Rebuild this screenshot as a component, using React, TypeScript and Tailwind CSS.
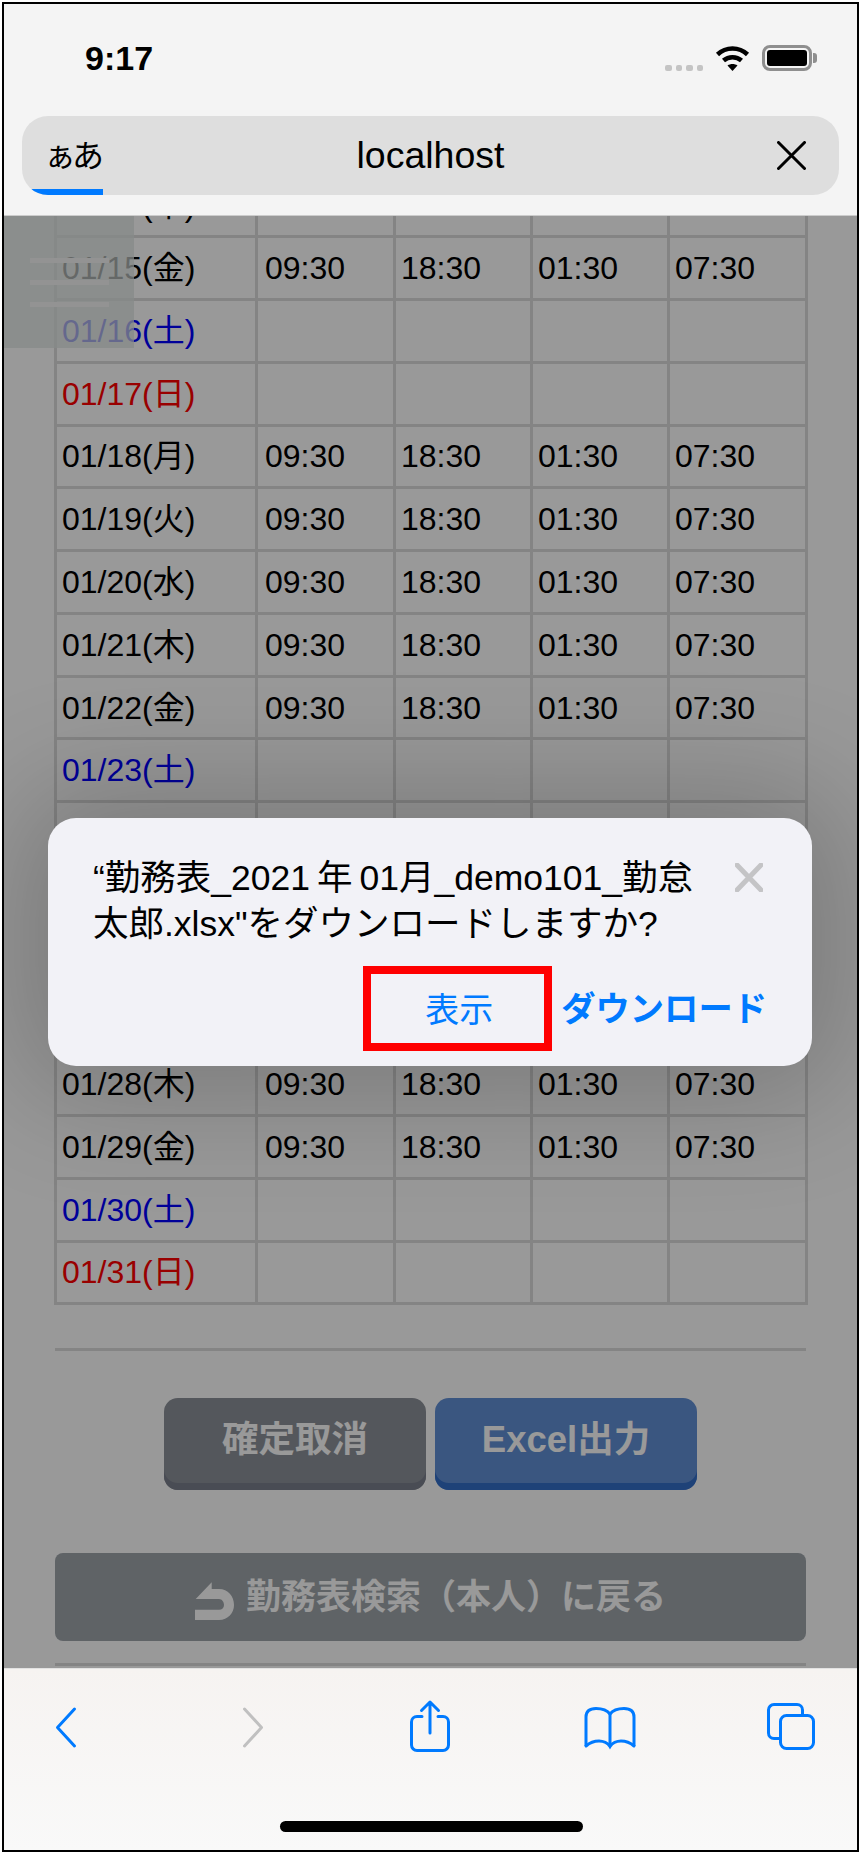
const FONT = "font-['Liberation_Sans','Noto_Sans_CJK_JP',sans-serif]";

const days = [
  ["01/14(木)", "work"],
  ["01/15(金)", "work"],
  ["01/16(土)", "sat"],
  ["01/17(日)", "sun"],
  ["01/18(月)", "work"],
  ["01/19(火)", "work"],
  ["01/20(水)", "work"],
  ["01/21(木)", "work"],
  ["01/22(金)", "work"],
  ["01/23(土)", "sat"],
  ["01/24(日)", "sun"],
  ["01/25(月)", "work"],
  ["01/26(火)", "work"],
  ["01/27(水)", "work"],
  ["01/28(木)", "work"],
  ["01/29(金)", "work"],
  ["01/30(土)", "sat"],
  ["01/31(日)", "sun"],
];

const times = ["09:30", "18:30", "01:30", "07:30"];

function StatusBar() {
  return (
    <div className="flex justify-between pl-[81px] pr-[40px] pt-[40px] h-[112px]">
      <div className="text-[34px] leading-[28px] font-bold text-black">9:17</div>
      <div className="flex items-end h-[27px]">
        <div className="flex gap-[4px] mr-[12px]">
          {[0, 1, 2, 3].map((i) => (
            <div key={i} className="w-[6.5px] h-[6.5px] rounded-[2px] bg-[#c4c4c4]" />
          ))}
        </div>
        <svg width="35" height="26" viewBox="0 0 35 26" className="mr-[12px]">
          <path d="M2.5 9.5C11 1.5 24 1.5 32.5 9.5" fill="none" stroke="#000" strokeWidth="4.5" />
          <path d="M8.5 15.5C13.5 11 21.5 11 26.5 15.5" fill="none" stroke="#000" strokeWidth="4.5" />
          <path d="M12.5 20.5C15.5 18.5 19.5 18.5 22.5 20.5L17.5 26Z" fill="#000" />
        </svg>
        <div className="flex items-center">
          <div className="w-[50px] h-[26px] border-[3px] border-[#8e8e8e] rounded-[8px] p-[2px]">
            <div className="w-full h-full bg-black rounded-[3px]" />
          </div>
          <div className="w-[4px] h-[10px] ml-[1px] bg-[#8e8e8e] rounded-r-[3px]" />
        </div>
      </div>
    </div>
  );
}

function UrlBar() {
  return (
    <div className="relative mx-[18px] h-[79px] rounded-[26px] bg-[#dedede] overflow-hidden grid grid-cols-[1fr_auto_1fr] items-center pl-[22px] pr-[33px]">
      <div className="text-[32px] leading-none tracking-[-4px] text-black">ぁあ</div>
      <div className="ml-[11px] text-[37.5px] leading-none text-black">localhost</div>
      <svg width="29" height="29" viewBox="0 0 29 29" className="justify-self-end">
        <path d="M1.5 1.5L27.5 27.5M27.5 1.5L1.5 27.5" stroke="#000" strokeWidth="3" strokeLinecap="round" />
      </svg>
      <div className="absolute left-0 bottom-0 w-[81px] h-[6px] bg-[#007aff]" />
    </div>
  );
}

function AttendanceTable() {
  return (
    <table className="ml-[50px] mt-[-43.5px] w-[751px] table-fixed border-collapse text-[32px] text-black">
      <colgroup>
        <col className="w-[201px]" />
        <col className="w-[138px]" />
        <col className="w-[137px]" />
        <col className="w-[137px]" />
        <col className="w-[138px]" />
      </colgroup>
      <tbody>
        {days.map(([label, kind]) => (
          <tr key={label} className="h-[62.77px]">
            <td
              className={
                "border-[3px] border-[#dcdcdc] px-[5px] py-0 leading-none whitespace-nowrap " +
                (kind === "sat" ? "text-[#0000ff]" : kind === "sun" ? "text-[#ff0000]" : "")
              }
            >
              {label}
            </td>
            {times.map((t, i) => (
              <td key={t} className={"border-[3px] border-[#dcdcdc] py-0 leading-none " + (i === 0 ? "px-[7px]" : "px-[5px]")}>
                {kind === "work" ? t : ""}
              </td>
            ))}
          </tr>
        ))}
      </tbody>
    </table>
  );
}

function ActionButton({ label, top, bottom }: { label: string; top: string; bottom: string }) {
  return (
    <button className={"relative w-[262px] h-[92px] rounded-[14px] pb-[7px] text-[36.5px] font-bold text-white " + top + " " + bottom}>
      {label}
    </button>
  );
}

function PageBelow() {
  return (
    <>
      <div className="ml-[51px] w-[751px] mt-[43px] h-[3px] bg-[#dcdcdc]" />
      <div className="flex justify-center gap-[9px] mt-[47px]">
        <ActionButton label="確定取消" top="bg-[#8c9199]" bottom="shadow-[inset_0_-7px_0_#7b7f8c]" />
        <ActionButton label="Excel出力" top="bg-[#628fd5]" bottom="shadow-[inset_0_-7px_0_#336ec9]" />
      </div>
      <div className="ml-[51px] w-[751px] mt-[63px] h-[88px] rounded-[8px] bg-[#9ea5ab] flex items-center justify-center gap-[11px] text-white text-[35px] font-bold">
        <svg width="40" height="38" viewBox="0 0 40 38" className="mt-[8px]">
          <path d="M16.7 .3L.7 17H24C27 17 29 20 29 23C29 26 27 27.7 24 27.7H0V38H24C33 38 39 31 39 23C39 14 33 7 24 7H16.7Z" fill="#fff" />
        </svg>
        <span>勤務表検索（本人）に戻る</span>
      </div>
      <div className="ml-[51px] w-[751px] mt-[22px] h-[3px] bg-[#dcdcdc]" />
    </>
  );
}

function MenuTab() {
  return (
    <div className="absolute left-0 top-0 w-[130px] h-[132px] bg-[#878b89]/75 pl-[26px] pt-[42px] flex flex-col gap-[17px]">
      {[0, 1, 2].map((i) => (
        <div key={i} className="w-[79px] h-[5px] bg-[#939393]" />
      ))}
    </div>
  );
}

function DownloadDialog() {
  return (
    <div className="absolute left-[44px] top-[814px] w-[764px] h-[248px] rounded-[28px] bg-[#f2f2f7] shadow-[0_0_120px_30px_rgba(0,0,0,0.2)] pl-[45px] pr-[49px] pt-[37px]">
      <div className="flex justify-between">
        <div className="text-[35.5px] leading-[46px] text-black whitespace-nowrap">
          “勤務表_2021<span className="mx-[7px]">年</span>01月_demo101_勤怠
          <br />
          太郎.xlsx"をダウンロードしますか?
        </div>
        <svg width="28" height="29" viewBox="0 0 28 29" className="mt-[8px] shrink-0">
          <path d="M2 2L26 27M26 2L2 27" stroke="#c4c4c6" strokeWidth="5" strokeLinecap="round" />
        </svg>
      </div>
      <div className="flex justify-end items-center mt-[19px] mr-[-49px] pr-[45px]">
        <div className="w-[189px] h-[85px] border-[8px] border-[#ff0000] flex items-center justify-center pl-[3px] pt-[4px] text-[34px] text-[#007aff]">
          表示
        </div>
        <div className="ml-[9px] mt-[3px] text-[34.3px] font-bold text-[#007aff] whitespace-nowrap">ダウンロード</div>
      </div>
    </div>
  );
}

function ToolBar() {
  const blue = "#007aff";
  return (
    <div className="h-[182px] shrink-0 border-t border-[#e2e2e2] bg-linear-to-b from-[#f6f3f1] to-[#f9f9f9] pt-[30px]">
      <div className="flex h-[56px]">
        <svg width="24" height="56" viewBox="0 0 24 56" className="ml-[50px]">
          <path d="M20.5 10L3.5 28.5L20.5 47" fill="none" stroke={blue} strokeWidth="3" strokeLinecap="round" strokeLinejoin="round" />
        </svg>
        <svg width="24" height="56" viewBox="0 0 24 56" className="ml-[163px]">
          <path d="M3.5 10L20.5 28.5L3.5 47" fill="none" stroke="#c0c0c0" strokeWidth="3" strokeLinecap="round" strokeLinejoin="round" />
        </svg>
        <svg width="44" height="56" viewBox="0 0 44 56" className="ml-[143px]">
          <path d="M14 17.5H9a5.5 5.5 0 0 0-5.5 5.5V46a5.5 5.5 0 0 0 5.5 5.5H35a5.5 5.5 0 0 0 5.5-5.5V23a5.5 5.5 0 0 0-5.5-5.5H30" fill="none" stroke={blue} strokeWidth="3" strokeLinecap="round" />
          <path d="M22 34V3.5M13.5 11.5L22 3L30.5 11.5" fill="none" stroke={blue} strokeWidth="3" strokeLinecap="round" strokeLinejoin="round" />
        </svg>
        <svg width="56" height="56" viewBox="0 0 56 56" className="ml-[130px]">
          <path d="M4 47V18C4 11 9 9.5 14 9.5C20 9.5 25 11 28 15C31 11 36 9.5 42 9.5C47 9.5 52 11 52 18V47" fill="none" stroke={blue} strokeWidth="3" />
          <path d="M4 47C8 43.5 13 42 17 42C21 42 26 44 28 47.5C30 44 35 42 39 42C43 42 48 43.5 52 47" fill="none" stroke={blue} strokeWidth="3" strokeLinecap="round" />
          <path d="M28 15V47" fill="none" stroke={blue} strokeWidth="3" />
        </svg>
        <svg width="52" height="56" viewBox="0 0 52 56" className="ml-[127px]">
          <rect x="15.5" y="16.5" width="33" height="33" rx="6" fill="none" stroke={blue} strokeWidth="3" />
          <path d="M37.5 15V11a5.5 5.5 0 0 0-5.5-5.5H9A5.5 5.5 0 0 0 3.5 11V34a5.5 5.5 0 0 0 5.5 5.5h5" fill="none" stroke={blue} strokeWidth="3" />
        </svg>
      </div>
      <div className="ml-[276px] mt-[66px] w-[303px] h-[11px] rounded-full bg-black" />
    </div>
  );
}

export default function App() {
  return (
    <div className={"w-[860px] h-[1852px] bg-white pl-[2px] pt-[2px] pr-[1px] " + FONT}>
      <div className="relative w-[857px] h-[1850px] border-2 border-black flex flex-col overflow-hidden">
        <div className="h-[212px] shrink-0 bg-[#f4f4f4] border-b border-[#cccccc]">
          <StatusBar />
          <UrlBar />
        </div>
        <div className="relative flex-1 overflow-hidden bg-white">
          <AttendanceTable />
          <PageBelow />
          <div className="absolute inset-0 bg-black/40" />
          <MenuTab />
        </div>
        <ToolBar />
        <DownloadDialog />
      </div>
    </div>
  );
}
